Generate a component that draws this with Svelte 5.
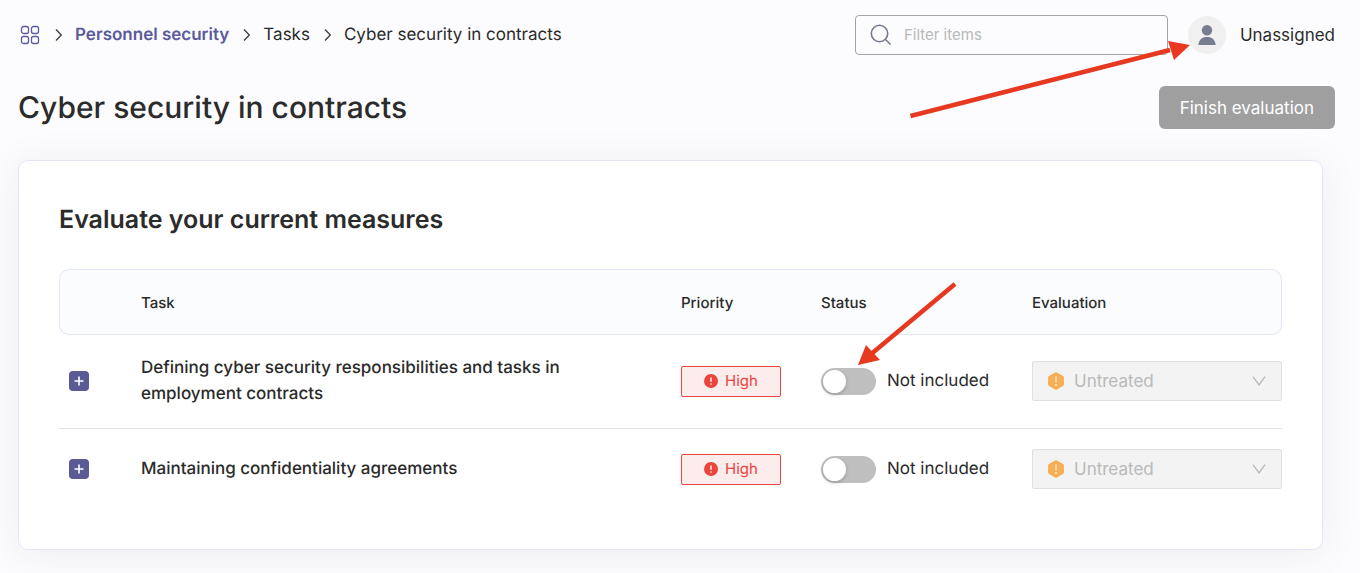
<script lang="ts">
  interface Task {
    id: number;
    name: string;
    priority: string;
    included: boolean;
    evaluation: string;
  }

  let filter = $state("");
  let tasks = $state<Task[]>([
    {
      id: 1,
      name: "Defining cyber security responsibilities and tasks in employment contracts",
      priority: "High",
      included: false,
      evaluation: "Untreated",
    },
    {
      id: 2,
      name: "Maintaining confidentiality agreements",
      priority: "High",
      included: false,
      evaluation: "Untreated",
    },
  ]);
</script>

{#snippet separator()}
  <svg class="sep" width="8" height="14" viewBox="0 0 8 14" aria-hidden="true">
    <path d="M2 1.5 7.3 7 2 12.5" />
  </svg>
{/snippet}

<div class="page">
  <header class="topbar">
    <nav class="crumbs" aria-label="Breadcrumb">
      <a class="home" href="#home" aria-label="Home">
        <svg width="20" height="20" viewBox="0 0 20 20" aria-hidden="true">
          <rect x="1.5" y="1.5" width="7" height="7" rx="2" />
          <rect x="11.5" y="1.5" width="7" height="7" rx="2" />
          <rect x="1.5" y="11.5" width="7" height="7" rx="2" />
          <rect x="11.5" y="11.5" width="7" height="7" rx="2" />
        </svg>
      </a>
      {@render separator()}
      <a class="parent" href="#personnel">Personnel security</a>
      {@render separator()}
      <span>Tasks</span>
      {@render separator()}
      <span>Cyber security in contracts</span>
    </nav>

    <label class="search">
      <svg width="22" height="22" viewBox="0 0 22 22" aria-hidden="true">
        <circle cx="9.5" cy="9.5" r="8.2" />
        <path d="M15.5 15.5 20.5 20.5" />
      </svg>
      <input type="text" placeholder="Filter items" aria-label="Filter items" bind:value={filter} />
    </label>

    <button type="button" class="assignee">
      <span class="avatar">
        <svg width="18" height="20" viewBox="0 0 18 20" aria-hidden="true">
          <circle cx="9" cy="5.2" r="5.2" />
          <path d="M0.3 20C1 14.500 4 12 9 12S17 14.500 17.700 20Z" />
        </svg>
      </span>
      Unassigned
    </button>
  </header>

  <div class="title-row">
    <h1>Cyber security in contracts</h1>
    <button type="button" class="finish" disabled>Finish evaluation</button>
  </div>

  <section class="card">
    <h2>Evaluate your current measures</h2>

    <table>
      <colgroup>
        <col class="c-expand" />
        <col />
        <col class="c-priority" />
        <col class="c-status" />
        <col class="c-evaluation" />
      </colgroup>
      <thead>
        <tr>
          <th></th>
          <th>Task</th>
          <th>Priority</th>
          <th>Status</th>
          <th>Evaluation</th>
        </tr>
      </thead>
      <tbody>
        {#each tasks as task (task.id)}
          <tr>
            <td class="expand">
              <button type="button" aria-label="Expand row">
                <svg width="10" height="10" viewBox="0 0 10 10" aria-hidden="true">
                  <path d="M5 0.5V9.5M0.5 5H9.5" />
                </svg>
              </button>
            </td>
            <td class="name">{task.name}</td>
            <td>
              <span class="tag">
                <svg width="14" height="14" viewBox="0 0 14 14" aria-hidden="true">
                  <circle cx="7" cy="7" r="7" fill="#e8453f" />
                  <path d="M7 3.5V7.8" stroke="#fff" stroke-width="1.4" />
                  <circle cx="7" cy="10" r="0.8" fill="#fff" />
                </svg>
                {task.priority}
              </span>
            </td>
            <td>
              <label class="switch">
                <input type="checkbox" role="switch" bind:checked={task.included} />
                {task.included ? "Included" : "Not included"}
              </label>
            </td>
            <td class="evaluation">
              <div class="select">
                <svg width="16" height="18" viewBox="0 0 16 18" aria-hidden="true">
                  <path
                    d="M7 0.6Q8 0 9 0.6L15 4Q16 4.6 16 5.7V12.3Q16 13.4 15 14L9 17.4Q8 18 7 17.4L1 14Q0 13.4 0 12.3V5.7Q0 4.6 1 4Z"
                    fill="#f5b057"
                  />
                  <path d="M8 4.5V10.5" stroke="#fbe3c3" stroke-width="1.6" />
                  <circle cx="8" cy="13" r="1" fill="#fbe3c3" />
                </svg>
                <select disabled aria-label="Evaluation" bind:value={task.evaluation}>
                  <option>Untreated</option>
                </select>
                <svg class="caret" width="14" height="10" viewBox="0 0 14 10" aria-hidden="true">
                  <path d="M1 0.7 7 8.8 13 0.7" />
                </svg>
              </div>
            </td>
          </tr>
        {/each}
      </tbody>
    </table>
  </section>

  <!-- Callout arrows: one to the assignee, one to the first status switch -->
  <svg class="callouts" width="360" height="380" viewBox="0 0 360 380" aria-hidden="true">
    <path d="M60.5 116 320 50" />
    <polygon points="318,41 340,45 324,60" />
    <path d="M105 284 20 355" />
    <polygon points="8,365 16,345 30,360" />
  </svg>
</div>

<style>
  :global(body) {
    background: #fcfcfe;
  }
  .page {
    position: relative;
    padding: 15px 25px 24px 18px;
    color: #2b2b2b;
    font-family: Inter, "Liberation Sans", sans-serif;
    font-size: 17px;
    line-height: 26px;
    text-rendering: geometricPrecision;
    overflow: hidden;
  }
  button,
  input,
  select {
    font: inherit;
    color: inherit;
  }

  .topbar {
    display: flex;
    align-items: center;
    height: 40px;
  }
  .crumbs {
    display: flex;
    flex: 1;
    align-items: center;
    gap: 13px;
    white-space: nowrap;
  }
  .crumbs a {
    color: #5a5a9c;
    text-decoration: none;
  }
  .home {
    display: flex;
    padding: 0 1px 0 2px;
  }
  .home svg {
    fill: none;
    stroke: #5a5a9c;
    stroke-width: 1.3;
  }
  .parent {
    font-weight: 600;
  }
  .sep {
    fill: none;
    stroke: #3c3c3c;
    stroke-width: 1.3;
  }

  .search {
    display: flex;
    align-items: center;
    gap: 12px;
    box-sizing: border-box;
    width: 313px;
    height: 40px;
    padding: 0 14px;
    border: 1px solid #a3a3a8;
    border-radius: 4px;
  }
  .search svg {
    flex: none;
    fill: none;
    stroke: #74798c;
    stroke-width: 1.6;
  }
  .search input {
    flex: 1;
    min-width: 0;
    padding: 0;
    border: 0;
    outline: 0;
    background: none;
    font-size: 15px;
  }
  .search input::placeholder {
    color: #b8b8b8;
    opacity: 1;
  }

  .assignee {
    display: flex;
    align-items: center;
    gap: 14px;
    margin-left: 20px;
    padding: 0;
    border: 0;
    background: none;
    cursor: pointer;
  }
  .avatar {
    display: flex;
    align-items: center;
    justify-content: center;
    width: 38px;
    height: 38px;
    border-radius: 50%;
    background: #f0f0f0;
  }
  .avatar svg {
    fill: #767d90;
  }

  .title-row {
    display: flex;
    align-items: center;
    justify-content: space-between;
    margin-top: 31px;
  }
  h1 {
    margin: 0;
    font-size: 30px;
    font-weight: 500;
    line-height: 42px;
  }
  .finish {
    height: 43px;
    padding: 0 21px;
    border: 0;
    border-radius: 6px;
    background: #9f9f9f;
    color: #fff;
  }

  .card {
    margin: 31px 12px 0 0;
    padding: 40px 40px 39px;
    border: 1px solid #e4e6f7;
    border-radius: 10px;
    background: #fff;
    box-shadow: 0 4px 40px rgba(40, 40, 80, 0.07);
  }
  h2 {
    margin: 0 0 30px;
    font-size: 25px;
    font-weight: 600;
    line-height: 38px;
  }

  table {
    width: 100%;
    table-layout: fixed;
    border-collapse: separate;
    border-spacing: 0;
  }
  .c-expand {
    width: 62px;
  }
  .c-priority {
    width: 140px;
  }
  .c-status {
    width: 211px;
  }
  .c-evaluation {
    width: 270px;
  }
  th {
    padding: 20px 20px 18px;
    border: solid #e4e6f7;
    border-width: 1px 0;
    background: #fbfcfe;
    font-size: 15px;
    font-weight: 500;
    text-align: left;
  }
  th:first-child {
    border-left-width: 1px;
    border-radius: 10px 0 0 10px;
  }
  th:last-child {
    border-right-width: 1px;
    border-radius: 0 10px 10px 0;
  }
  td {
    padding: 20px 20px 21px;
    vertical-align: middle;
  }
  tbody tr:not(:last-child) td {
    border-bottom: 1px solid #e2e2e2;
  }
  td.name {
    font-weight: 500;
  }
  td.expand {
    padding-left: 10px;
  }
  td.evaluation {
    padding-right: 0;
  }

  .expand button {
    display: flex;
    align-items: center;
    justify-content: center;
    width: 20px;
    height: 20px;
    padding: 0;
    border: 0;
    border-radius: 4px;
    background: #5a5a94;
    cursor: pointer;
  }
  .expand svg {
    stroke: #fff;
    stroke-width: 1.6;
  }

  .tag {
    display: flex;
    align-items: center;
    justify-content: center;
    gap: 7px;
    box-sizing: border-box;
    height: 31px;
    border: 1px solid #e8453f;
    border-radius: 2px;
    background: #fdecec;
    color: #e8453f;
    font-size: 15px;
  }

  .switch {
    display: flex;
    align-items: center;
    gap: 11px;
    white-space: nowrap;
    cursor: pointer;
  }
  .switch input {
    display: flex;
    flex: none;
    align-items: center;
    box-sizing: border-box;
    width: 55px;
    height: 27px;
    margin: 0;
    padding: 0 2px;
    border-radius: 14px;
    background: #bfbfbf;
    appearance: none;
    cursor: pointer;
  }
  .switch input::before {
    content: "";
    width: 23px;
    height: 23px;
    border-radius: 50%;
    background: #fff;
    box-shadow: 0 2px 4px rgba(0, 35, 11, 0.2);
  }
  .switch input:checked {
    justify-content: flex-end;
    background: #5a5a94;
  }

  .select {
    display: grid;
    grid-template-columns: 16px 1fr 14px;
    align-items: center;
    box-sizing: border-box;
    height: 40px;
    padding: 0 15px;
    border: 1px solid #e0e0e0;
    border-radius: 2px;
    background: #f3f3f3;
  }
  .select select {
    height: 38px;
    padding: 0 10px;
    border: 0;
    background: none;
    color: #b9b9b9;
    opacity: 1;
    appearance: none;
  }
  .caret {
    fill: none;
    stroke: #b5b5b5;
    stroke-width: 1.3;
  }

  .callouts {
    position: absolute;
    top: 0;
    right: 150px;
    fill: #e73820;
    pointer-events: none;
  }
  .callouts path {
    fill: none;
    stroke: #e73820;
    stroke-width: 4.5;
  }
</style>
